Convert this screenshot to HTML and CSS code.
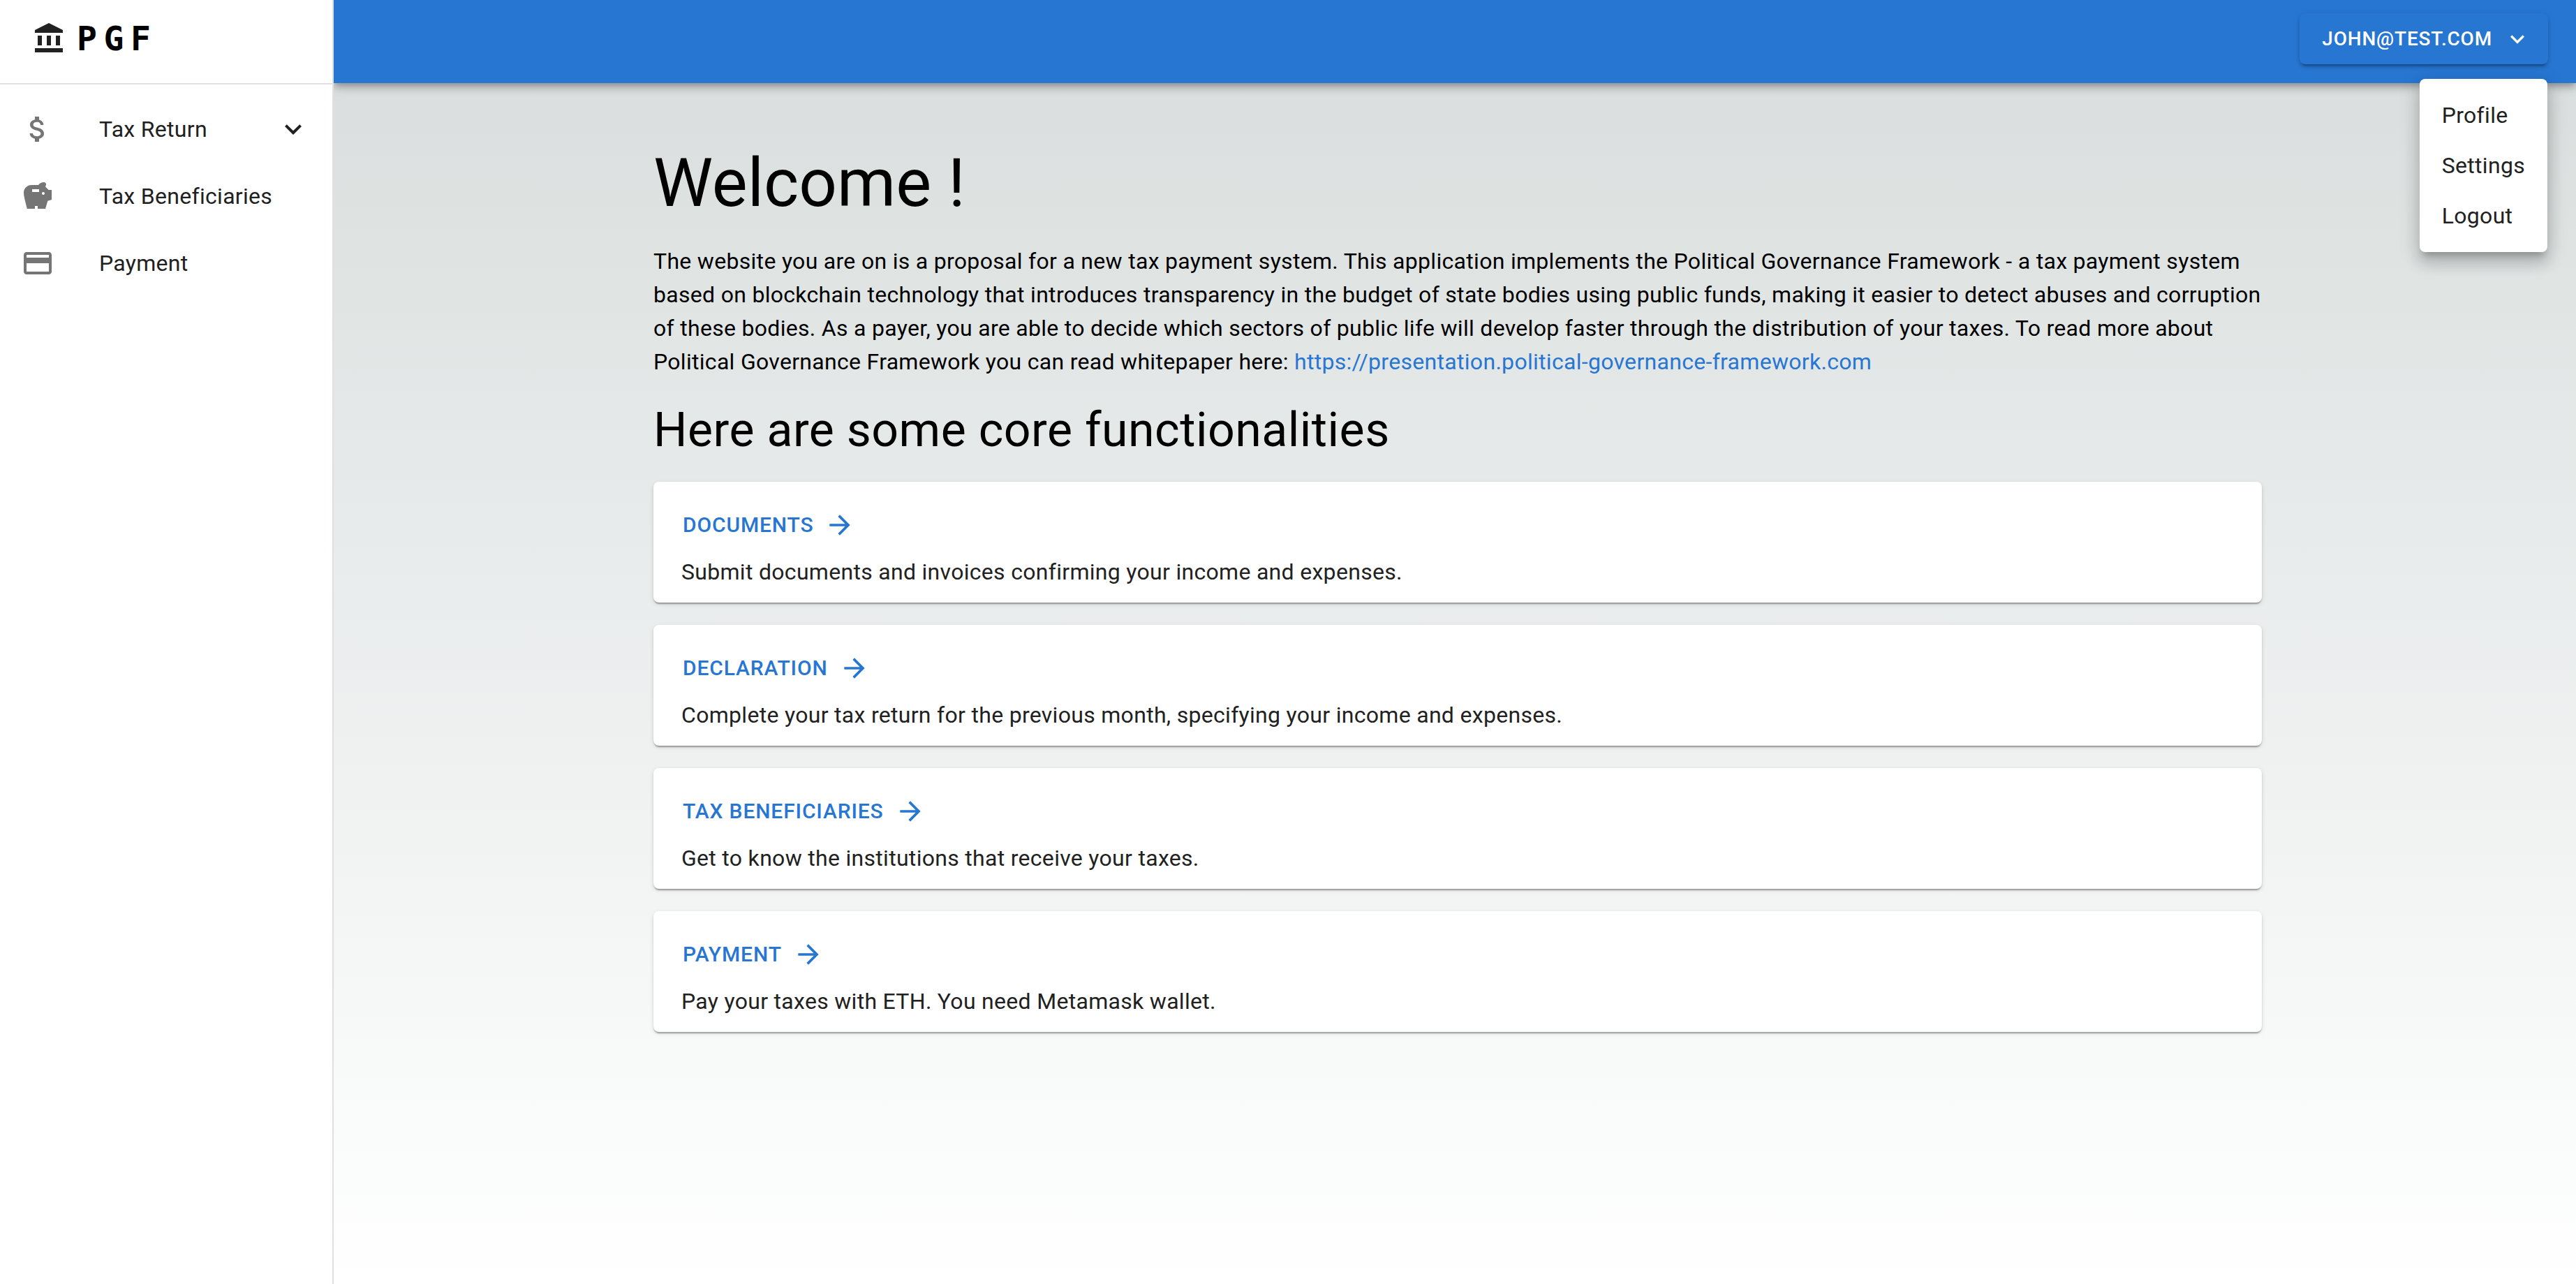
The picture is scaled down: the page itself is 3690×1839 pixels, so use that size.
FILE: index.html
```html
<!DOCTYPE html>
<html lang="en">
<head>
  <meta charset="utf-8">
  <meta name="viewport" content="width=device-width, initial-scale=1">
  <title>PGF</title>
  <link rel="stylesheet" href="styles.css">
</head>
<body class="app">
  <aside class="sidebar">
    <div class="brand">
      <svg class="icon icon-dark" viewBox="0 0 24 24" aria-hidden="true"><path d="M4 10h3v7H4zm6.500 0h3v7h-3zM2 19h20v3H2zm15-9h3v7h-3zm-5-9L2 6v2h20V6z"/></svg>
      <span class="brand-name">PGF</span>
    </div>
    <nav class="nav">
      <button class="nav-item" type="button" aria-expanded="false">
        <svg class="icon icon-muted" viewBox="0 0 24 24" aria-hidden="true"><path d="M11.8 10.9c-2.27-.59-3-1.2-3-2.15 0-1.09 1.01-1.85 2.7-1.85 1.78 0 2.44.85 2.5 2.1h2.21c-.07-1.72-1.12-3.3-3.21-3.81V3h-3v2.16c-1.94.42-3.5 1.68-3.5 3.61 0 2.31 1.91 3.46 4.7 4.13 2.5.6 3 1.48 3 2.41 0 .69-.49 1.79-2.7 1.79-2.06 0-2.87-.92-2.98-2.1h-2.2c.12 2.19 1.76 3.42 3.68 3.83V21h3v-2.15c1.95-.37 3.5-1.5 3.5-3.55 0-2.84-2.43-3.81-4.7-4.4z"/></svg>
        <span class="nav-label">Tax Return</span>
        <svg class="icon icon-dark" viewBox="0 0 24 24" aria-hidden="true"><path d="M16.59 8.59 12 13.17 7.41 8.59 6 10l6 6 6-6z"/></svg>
      </button>
      <a class="nav-item" href="#beneficiaries">
        <svg class="icon icon-muted" viewBox="0 0 24 24" aria-hidden="true"><path d="m19.83 7.5-2.27-2.27c.07-.42.18-.81.32-1.15.08-.18.12-.37.12-.58 0-.83-.67-1.5-1.5-1.5-1.64 0-3.09.79-4 2h-5C4.46 4 2 6.46 2 9.5S4.5 21 4.500 21H10v-2h2v2h5.500l1.680-5.590 2.820-.940V7.500h-2.170zM13 9H8V7h5v2zm3 2c-.55 0-1-.45-1-1s.45-1 1-1 1 .45 1 1-.45 1-1 1z"/></svg>
        <span class="nav-label">Tax Beneficiaries</span>
      </a>
      <a class="nav-item" href="#payment">
        <svg class="icon icon-muted" viewBox="0 0 24 24" aria-hidden="true"><path d="M20 4H4c-1.11 0-1.99.89-1.99 2L2 18c0 1.11.89 2 2 2h16c1.11 0 2-.89 2-2V6c0-1.11-.89-2-2-2zm0 14H4v-6h16v6zm0-10H4V6h16v2z"/></svg>
        <span class="nav-label">Payment</span>
      </a>
    </nav>
  </aside>

  <div class="page">
    <header class="topbar">
      <div class="account">
        <button class="account-button" type="button" aria-haspopup="menu" aria-expanded="true">
          john@test.com
          <svg class="account-icon" viewBox="0 0 24 24" aria-hidden="true"><path d="M7.410 8.590 12 13.170l4.590-4.580L18 10l-6 6-6-6z"/></svg>
        </button>
        <div class="menu" role="menu">
          <a class="menu-item" role="menuitem" href="#profile">Profile</a>
          <a class="menu-item" role="menuitem" href="#settings">Settings</a>
          <a class="menu-item" role="menuitem" href="#logout">Logout</a>
        </div>
      </div>
    </header>

    <main class="content">
      <div class="container">
        <h1 class="title">Welcome !</h1>
        <p class="intro">The website you are on is a proposal for a new tax payment system. This application implements the Political Governance Framework - a tax payment system based on blockchain technology that introduces transparency in the budget of state bodies using public funds, making it easier to detect abuses and corruption of these bodies. As a payer, you are able to decide which sectors of public life will develop faster through the distribution of your taxes. To read more about Political Governance Framework you can read whitepaper here: <a class="link" href="https://presentation.political-governance-framework.com">https://presentation.political-governance-framework.com</a></p>
        <h2 class="subtitle">Here are some core functionalities</h2>
        <section class="card">
          <a class="card-link" href="#documents">Documents
            <svg class="card-icon" viewBox="0 0 24 24" aria-hidden="true"><path d="m12 4-1.410 1.410L16.170 11H4v2h12.170l-5.580 5.590L12 20l8-8z"/></svg></a>
          <p class="card-text">Submit documents and invoices confirming your income and expenses.</p>
        </section>
        <section class="card">
          <a class="card-link" href="#declaration">Declaration
            <svg class="card-icon" viewBox="0 0 24 24" aria-hidden="true"><path d="m12 4-1.410 1.410L16.170 11H4v2h12.170l-5.580 5.590L12 20l8-8z"/></svg></a>
          <p class="card-text">Complete your tax return for the previous month, specifying your income and expenses.</p>
        </section>
        <section class="card">
          <a class="card-link" href="#beneficiaries">Tax Beneficiaries
            <svg class="card-icon" viewBox="0 0 24 24" aria-hidden="true"><path d="m12 4-1.410 1.410L16.170 11H4v2h12.170l-5.580 5.590L12 20l8-8z"/></svg></a>
          <p class="card-text">Get to know the institutions that receive your taxes.</p>
        </section>
        <section class="card">
          <a class="card-link" href="#payment">Payment
            <svg class="card-icon" viewBox="0 0 24 24" aria-hidden="true"><path d="m12 4-1.410 1.410L16.170 11H4v2h12.170l-5.580 5.590L12 20l8-8z"/></svg></a>
          <p class="card-text">Pay your taxes with ETH. You need Metamask wallet.</p>
        </section>
      </div>
    </main>
  </div>
</body>
</html>
```
FILE: styles.css
```css
:root {
  --primary: #2776d2;
  --text: #212121;
  --muted: #757575;
  --divider: #e0e0e0;
}

* {
  box-sizing: border-box;
}

.app {
  display: flex;
  min-height: 100vh;
  margin: 0;
  background: #fff;
  color: var(--text);
  font-family: Roboto, "Liberation Sans", sans-serif;
  font-size: 32px;
  line-height: 48px;
  letter-spacing: 0.00938em;
}

.icon {
  flex: none;
  width: 48px;
  height: 48px;
}

.icon-dark {
  fill: var(--text);
}

.icon-muted {
  fill: var(--muted);
}

/* Sidebar, stacked above the top bar's shadow */

.sidebar {
  position: relative;
  z-index: 1;
  flex: none;
  width: 478px;
  border-right: 2px solid var(--divider);
  background: #fff;
}

.brand {
  display: flex;
  align-items: center;
  gap: 16px;
  height: 121px;
  padding: 0 46px 10px;
  border-bottom: 2px solid var(--divider);
}

.brand-name {
  color: #000;
  font-family: "DejaVu Sans Mono", monospace;
  font-size: 48px;
  font-weight: 700;
  line-height: 56px;
  letter-spacing: 0.2em;
}

.nav {
  display: flex;
  flex-direction: column;
  padding: 16px 0;
}

.nav-item {
  display: flex;
  align-items: center;
  gap: 64px;
  width: 100%;
  height: 96px;
  padding: 0 32px 0 30px;
  border: 0;
  background: none;
  color: inherit;
  font: inherit;
  letter-spacing: inherit;
  text-align: left;
  text-decoration: none;
  cursor: pointer;
}

.nav-label {
  flex: 1;
  white-space: nowrap;
}

.nav-label + .icon {
  margin-left: -64px;
}

/* Top bar */

.page {
  display: flex;
  flex: 1;
  flex-direction: column;
  min-width: 0;
  background: linear-gradient(#d7dddc, #fff);
}

.topbar {
  display: flex;
  justify-content: flex-end;
  align-items: flex-start;
  height: 119px;
  padding: 19px 40px 0;
  background: var(--primary);
  box-shadow: 0 4px 8px -2px rgba(0, 0, 0, 0.2), 0 8px 10px rgba(0, 0, 0, 0.14), 0 2px 20px rgba(0, 0, 0, 0.12);
}

.account {
  position: relative;
}

.account-button {
  display: flex;
  align-items: center;
  gap: 16px;
  padding: 12px 24px 12px 32px;
  border: 0;
  border-radius: 8px;
  background: var(--primary);
  box-shadow: 0 6px 2px -4px rgba(0, 0, 0, 0.2), 0 4px 4px rgba(0, 0, 0, 0.14), 0 2px 10px rgba(0, 0, 0, 0.12);
  color: #fff;
  font-family: inherit;
  font-size: 28px;
  font-weight: 500;
  line-height: 49px;
  letter-spacing: 0.02857em;
  text-transform: uppercase;
  cursor: pointer;
}

.account-icon {
  width: 40px;
  height: 40px;
  fill: #fff;
}

.menu {
  position: absolute;
  z-index: 1;
  top: 94px;
  right: 1px;
  padding: 16px 0;
  border-radius: 8px;
  background: #fff;
  box-shadow: 0 10px 10px -6px rgba(0, 0, 0, 0.2), 0 16px 20px 2px rgba(0, 0, 0, 0.14), 0 6px 28px 4px rgba(0, 0, 0, 0.12);
}

.menu-item {
  display: block;
  padding: 12px 32px;
  color: inherit;
  text-decoration: none;
}

/* Main content */

.content {
  padding: 87px 40px 88px 48px;
}

.container {
  display: flex;
  flex-direction: column;
  gap: 32px;
  max-width: 2304px;
  margin: 0 auto;
}

.title,
.subtitle,
.intro,
.card-text {
  margin: 0;
}

.title,
.subtitle,
.intro {
  color: #000;
}

.title {
  font-size: 96px;
  font-weight: 400;
  line-height: 112px;
  letter-spacing: 0;
}

.subtitle {
  font-size: 68px;
  font-weight: 400;
  line-height: 84px;
  letter-spacing: 0.00735em;
}

.link {
  color: var(--primary);
  text-decoration: none;
}

.card {
  padding: 20px;
  border-radius: 8px;
  background: #fff;
  box-shadow: 0 4px 2px -2px rgba(0, 0, 0, 0.2), 0 2px 2px rgba(0, 0, 0, 0.14), 0 2px 6px rgba(0, 0, 0, 0.12);
}

.card-link {
  display: flex;
  align-items: center;
  gap: 16px;
  width: fit-content;
  padding: 15px 14px 17px 22px;
  color: var(--primary);
  font-size: 30px;
  font-weight: 500;
  line-height: 53px;
  letter-spacing: 0.02857em;
  text-decoration: none;
  text-transform: uppercase;
}

.card-icon {
  width: 44px;
  height: 44px;
  fill: var(--primary);
}

.card-text {
  padding: 0 20px;
}
```
